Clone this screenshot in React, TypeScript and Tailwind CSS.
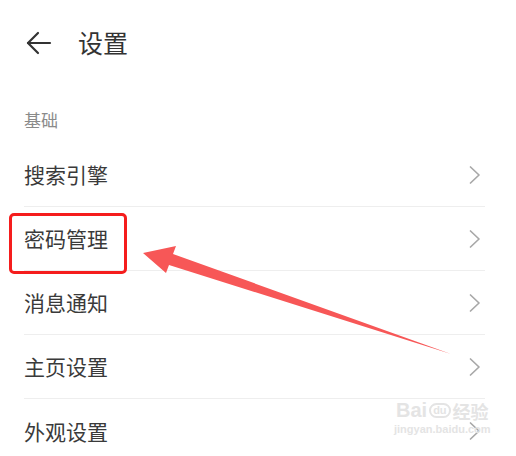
const items = ['搜索引擎', '密码管理', '消息通知', '主页设置', '外观设置'];

const BackArrow = () => (
    <svg width="26" height="24" viewBox="0 0 26 24" fill="none" stroke="#333" strokeWidth="2.2" strokeLinecap="round" strokeLinejoin="round">
        <path d="M24 12H2" />
        <path d="M12 2L2 12l10 10" />
    </svg>
);

const Chevron = () => (
    <svg width="14" height="20" viewBox="0 0 14 20" fill="none" stroke="#a8a8a8" strokeWidth="1.7" strokeLinecap="round" strokeLinejoin="round" className="mr-[3px]">
        <path d="M2.5 2L11 10L2.5 18" />
    </svg>
);

export default function App() {
    return (
        <div
            className="relative w-[516px] h-[456px] overflow-hidden bg-white text-[#333]"
            style={{ fontFamily: '"Noto Sans CJK SC", "Noto Sans", sans-serif' }}
        >
            <div className="flex items-center h-[84px] pl-[26px] pt-[1px]">
                <BackArrow />
                <span className="ml-[26px] text-[25px] leading-none">设置</span>
            </div>

            <div className="pl-[24px] pt-[27px] h-[59px]">
                <div className="text-[17px] leading-none text-[#8a8a8a]">基础</div>
            </div>

            <div className="pl-[24px] pr-[31px]">
                {items.map((label, i) => (
                    <div
                        key={label}
                        className={`flex items-center justify-between h-[64px] ${i < items.length - 1 ? 'border-b border-[#eeeeee]' : ''}`}
                    >
                        <span className="text-[21px] leading-none text-[#3a3a3a]">{label}</span>
                        <Chevron />
                    </div>
                ))}
            </div>

            {/* annotation: red box */}
            <div className="absolute left-[9px] top-[213px] w-[118px] h-[61px] border-[3px] border-[#f51d1d] rounded-[5px]" />

            {/* annotation: arrow */}
            <svg className="absolute left-0 top-0" width="516" height="456" viewBox="0 0 516 456">
                <polygon
                    points="143,253 176,246 173,254 451,354 169,265 166,273"
                    fill="#f75757"
                />
            </svg>

            {/* watermark */}
            <div className="absolute left-[394px] top-[400px] flex flex-col items-center text-[#e4e4e4] leading-none select-none">
                <div className="flex items-end gap-[2px]">
                    <span className="text-[20px] font-bold" style={{ fontFamily: '"Liberation Sans", sans-serif' }}>Bai</span>
                    <span className="text-[11px] font-bold border-2 border-[#e4e4e4] rounded-full px-[2px] mb-[2px]" style={{ fontFamily: '"Liberation Sans", sans-serif' }}>du</span>
                    <span className="text-[18px] font-bold">经验</span>
                </div>
                <span className="mt-[4px] text-[11px] font-bold" style={{ fontFamily: '"Liberation Sans", sans-serif' }}>jingyan.baidu.com</span>
            </div>
        </div>
    );
}
